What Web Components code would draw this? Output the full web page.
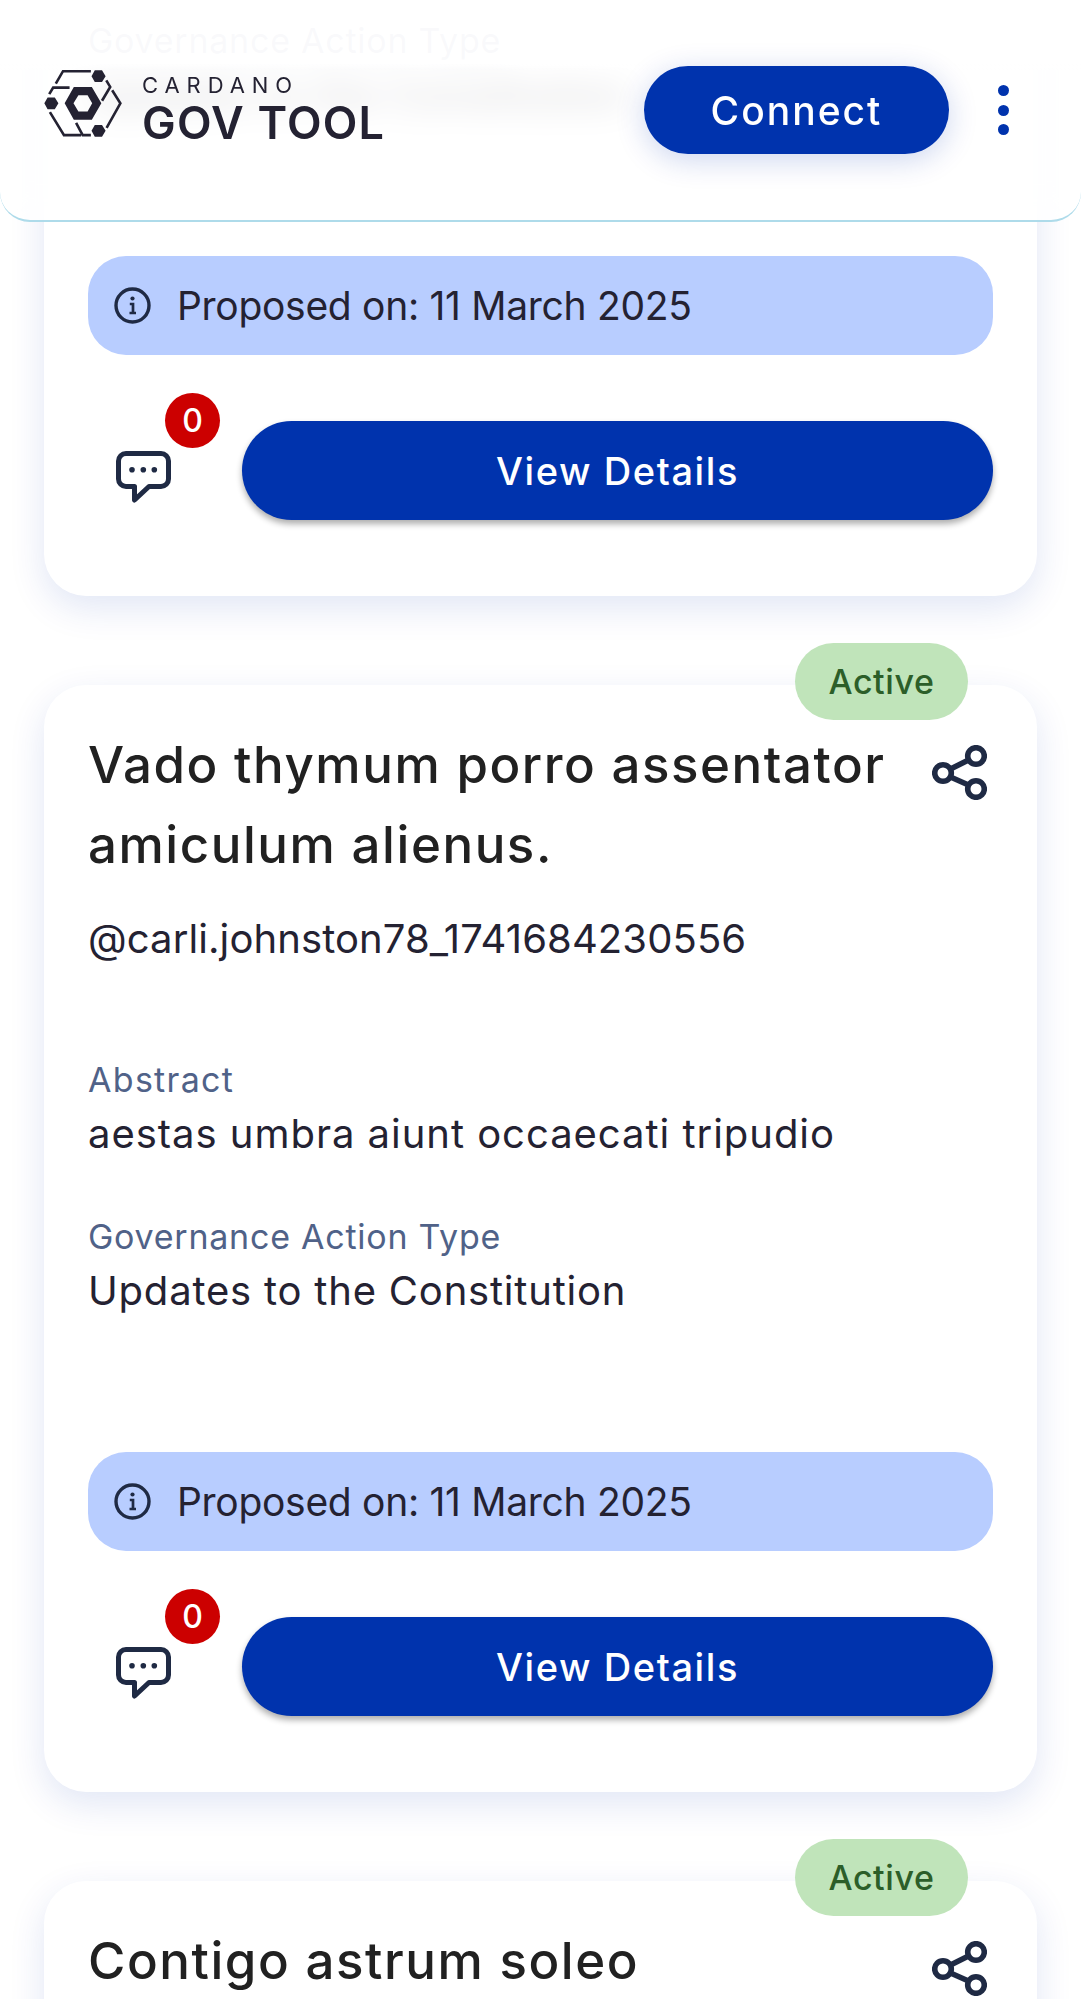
<!doctype html>
<html><head><meta charset="utf-8"><style>
html,body{margin:0;background:#fff}
body{font-family:Inter,"Liberation Sans",sans-serif;color:#242232}
</style></head><body>

<template id="tpl-app">
<style>
:host{display:block;position:relative;height:100vh;overflow:hidden}
.list{display:flex;flex-direction:column;gap:89px;padding:0 44px;margin-top:-511px}
</style>
<slot name="header"></slot>
<div class="list"><slot></slot></div>
</template>

<template id="tpl-header">
<style>
:host{display:block;position:absolute;top:0;left:0;right:0;z-index:5}
.bar{position:relative;height:220px;display:flex;align-items:center;padding:0 62px 0 44px;background:linear-gradient(rgba(255,255,255,.965) 62px,rgba(255,255,255,.8) 70px);border-bottom:2px solid #aedbea;border-radius:0 0 30px 30px}
.frost{position:absolute;inset:0;border-radius:0 0 30px 30px;backdrop-filter:blur(16px);-webkit-mask-image:linear-gradient(transparent 58px,#000 68px);mask-image:linear-gradient(transparent 58px,#000 68px);z-index:-1}
.spacer{flex:1}
.dots{width:32px;margin-left:38px;display:flex;flex-direction:column;align-items:center;gap:8.5px}
.dots i{width:11px;height:11px;border-radius:50%;background:#0033ad}
</style>
<div class="bar">
<div class="frost"></div>
<gov-logo></gov-logo>
<div class="spacer"></div>
<gov-button kind="connect">Connect</gov-button>
<div class="dots"><i></i><i></i><i></i></div>
</div>
</template>

<template id="tpl-logo">
<style>
:host{display:flex;align-items:center;gap:20px;margin-bottom:14px}
svg{display:block;width:78px;height:68px}
.t{display:flex;flex-direction:column;color:#242232;margin:6px 0 -6px}
.a{font-size:22px;line-height:22px;letter-spacing:6.9px;font-weight:400}
.b{font-size:45px;line-height:44px;margin-top:5px;letter-spacing:1.2px;font-weight:600}
</style>
<svg viewBox="42 54 238 206" aria-hidden="true">
<path fill="#242232" fill-rule="evenodd" d="M105 158 133 108H188L217 158 188 208H133ZM132 158 147 183H175L189 158 175 133H147Z"/>
<path fill="#242232" d="M187 75 197 57H219L230 75 219 93H197ZM43 158 53 140H75L86 158 75 176H53ZM187 242 197 224H219L230 242 219 260H197Z"/>
<g fill="none" stroke="#242232" stroke-width="8">
<path d="M78 98 100 60H185"/>
<path d="M58 130 70 110H120"/>
<path d="M232 88 244 108 219 150"/>
<path d="M250 118 275 158 233 233"/>
<path d="M60 185 103 255H155"/>
<path d="M140 218 160 255H185"/>
</g>
</svg>
<div class="t"><span class="a">CARDANO</span><span class="b">GOV TOOL</span></div>
</template>

<template id="tpl-button">
<style>
:host{display:block}
.btn{display:flex;align-items:center;justify-content:center;background:#0033ad;color:#fff;font-weight:500}
:host([kind=connect]) .btn{width:305px;height:88px;border-radius:44px;font-size:39px;letter-spacing:2px;box-shadow:0 6px 30px rgba(0,51,173,.2)}
:host([kind=details]) .btn{height:99px;border-radius:50px;font-size:38px;letter-spacing:1.6px;box-shadow:0 4px 6px rgba(0,0,0,.32)}
</style>
<div class="btn"><slot></slot></div>
</template>

<template id="tpl-card">
<style>
:host{display:block;position:relative;background:#fff;border-radius:42px;padding:40px 44px 76px;box-shadow:0 12px 36px rgba(0,51,173,.12)}
:host([above-fold]) .status{display:none}
:host([below-fold]) .rest{display:none}
.status{position:absolute;top:-42px;right:69px;width:173px;height:77px;border-radius:39px;background:#c0e4ba;color:#2c5e29;display:flex;align-items:center;justify-content:center;font-size:34px;font-weight:500;letter-spacing:.6px}
.top{display:grid;grid-template-columns:1fr 55px;column-gap:20px;padding-right:6px}
.title{min-height:160px;font-size:51px;line-height:80px;font-weight:500;letter-spacing:1.55px;color:#212121}
.share{margin-top:20px}
.share svg{display:block}
.handle{margin-top:24px;min-height:60px;font-size:40px;line-height:60px;letter-spacing:.1px}
.label{min-height:48px;font-size:34px;line-height:48px;color:#506288;letter-spacing:.75px}
.value{min-height:60px;font-size:40px;line-height:60px}
.abstract{margin-top:87px}
.abstract .label{letter-spacing:1.3px}
.abstract .value{letter-spacing:.97px}
.type{margin-top:49px}
.type .value{letter-spacing:.8px}
.date{margin-top:131px;height:99px;box-sizing:border-box;padding-left:26px;display:flex;align-items:center;gap:26px;background:#b8cdff;border-radius:38px;font-size:39px;letter-spacing:-.3px}
.date svg{flex:none}
.foot{margin-top:66px;display:flex}
.comments{position:relative;flex:none;width:154px;box-sizing:border-box;padding:30px 0 0 28px}
.comments svg{display:block}
.count{position:absolute;top:-28px;left:77px;width:55px;height:55px;border-radius:50%;background:#c00;color:#fff;display:flex;align-items:center;justify-content:center;font-size:32px;font-weight:500}
gov-button{flex:1}
</style>
<div class="status"><slot name="status">Active</slot></div>
<div class="top">
<div class="title"><slot name="title"></slot></div>
<div class="share">
<svg width="55" height="55" viewBox="0 0 55 55" fill="none" stroke="#1f2a44" stroke-width="5.6"><circle cx="11" cy="28" r="8.3"/><circle cx="44" cy="11" r="8.3"/><circle cx="44" cy="44" r="8.3"/><path d="M18.5 24 36.500 15M18.500 32 36.500 40"/></svg>
</div>
</div>
<div class="rest">
<div class="handle"><slot name="handle"></slot></div>
<div class="abstract"><div class="label"><slot name="abstract-label"></slot></div><div class="value"><slot name="abstract"></slot></div></div>
<div class="type"><div class="label"><slot name="type-label"></slot></div><div class="value"><slot name="type"></slot></div></div>
<div class="date">
<svg width="37" height="37" viewBox="0 0 37 37" fill="none" stroke="#1f2a44"><circle cx="18.500" cy="18.500" r="16.500" stroke-width="3.400"/><circle cx="18.500" cy="11.500" r="2.100" fill="#1f2a44" stroke="none"/><path d="M15.800 17H19V26M15.500 26H22" stroke-width="2.700"/></svg>
<span><slot name="date"></slot></span>
</div>
<div class="foot">
<div class="comments">
<svg width="55" height="52" viewBox="0 0 55 52" fill="none" stroke="#1f2a44" stroke-width="5" stroke-linejoin="round"><path d="M10 2.500H45A7.500 7.500 0 0 1 52.500 10V28A7.500 7.500 0 0 1 45 35.500H33L18.500 49V35.500H10A7.500 7.500 0 0 1 2.500 28V10A7.500 7.500 0 0 1 10 2.500Z"/><g fill="#1f2a44" stroke="none"><circle cx="16" cy="18.700" r="2.800"/><circle cx="27.300" cy="18.700" r="2.800"/><circle cx="38.300" cy="18.700" r="2.800"/></g></svg>
<div class="count"><slot name="count">0</slot></div>
</div>
<gov-button kind="details">View Details</gov-button>
</div>
</div>
</template>

<gov-app>
<gov-header slot="header"></gov-header>
<gov-card above-fold>
<span slot="type-label">Governance Action Type</span>
<span slot="type">Updates to the Constitution</span>
<span slot="date">Proposed on: 11 March 2025</span>
</gov-card>
<gov-card>
<span slot="title">Vado thymum porro assentator amiculum alienus.</span>
<span slot="handle">@carli.johnston78_1741684230556</span>
<span slot="abstract-label">Abstract</span>
<span slot="abstract">aestas umbra aiunt occaecati tripudio</span>
<span slot="type-label">Governance Action Type</span>
<span slot="type">Updates to the Constitution</span>
<span slot="date">Proposed on: 11 March 2025</span>
</gov-card>
<gov-card below-fold>
<span slot="title">Contigo astrum soleo</span>
</gov-card>
</gov-app>

<script>
function define(name, tpl) {
  customElements.define(name, class extends HTMLElement {
    constructor() {
      super();
      this.attachShadow({ mode: "open" }).appendChild(document.getElementById(tpl).content.cloneNode(true));
    }
  });
}
define("gov-button", "tpl-button");
define("gov-logo", "tpl-logo");
define("gov-header", "tpl-header");
define("gov-card", "tpl-card");
define("gov-app", "tpl-app");
</script>
</body></html>
